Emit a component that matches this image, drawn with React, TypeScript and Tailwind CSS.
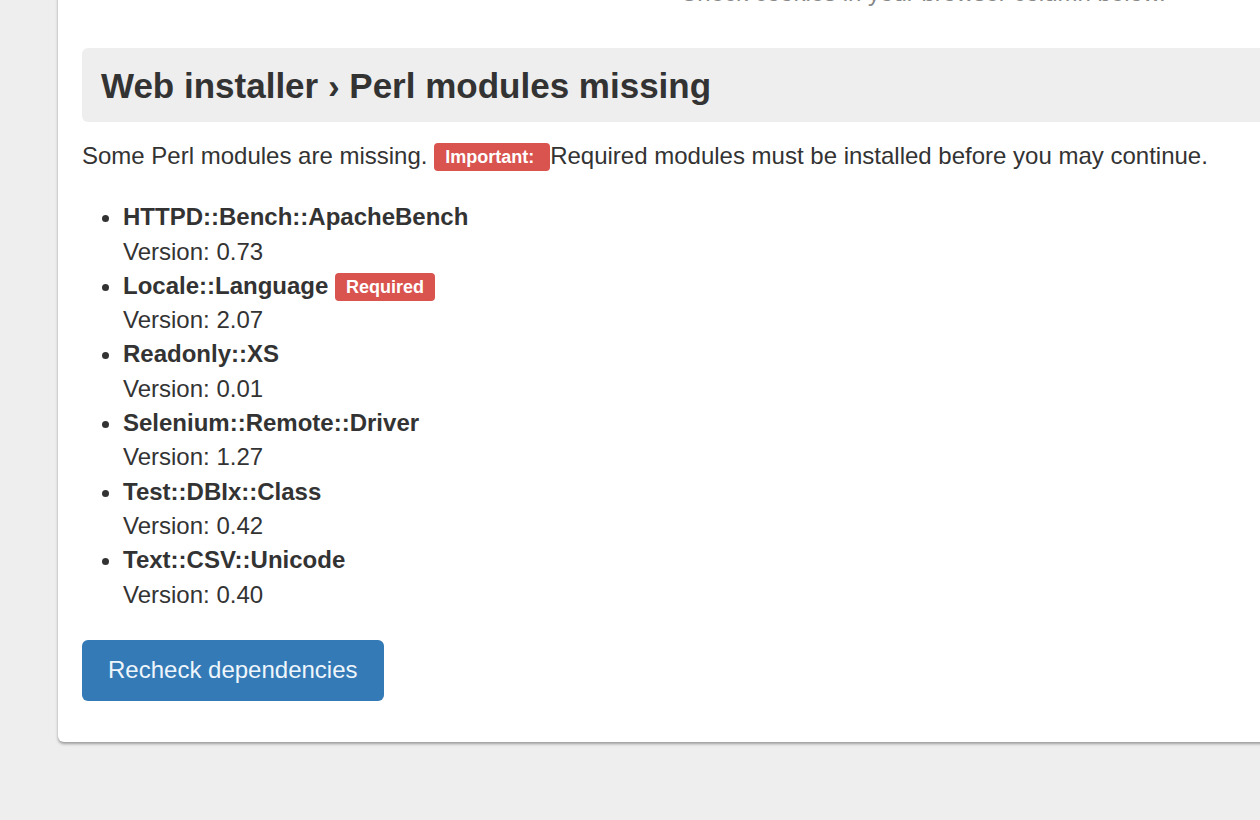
import React from 'react';

const modules = [
  { name: 'HTTPD::Bench::ApacheBench', version: '0.73', required: false },
  { name: 'Locale::Language', version: '2.07', required: true },
  { name: 'Readonly::XS', version: '0.01', required: false },
  { name: 'Selenium::Remote::Driver', version: '1.27', required: false },
  { name: 'Test::DBIx::Class', version: '0.42', required: false },
  { name: 'Text::CSV::Unicode', version: '0.40', required: false },
];

const Badge = ({ children }: { children: React.ReactNode }) => (
  <span className="inline-block rounded-[4px] bg-[#d9534f] px-[11px] pt-[5px] pb-[5px] align-[1px] text-[18px] font-bold leading-none text-white">
    {children}
  </span>
);

const App = () => {
  return (
    <div className="h-[820px] w-[1260px] overflow-hidden bg-[#eeeeee] font-['Liberation_Sans',Arial,sans-serif] text-[24px] leading-[34.3px] text-[#333333]">
      <div className="ml-[58px] -mt-[24px] w-[1400px] rounded-[6px] bg-white pb-[41px] pl-[24px] shadow-[0_2px_3px_rgba(0,0,0,0.35)]">
        {/* tail of the line above, mostly off screen */}
        <div className="h-[34px] pl-[598px] text-[#888]">Check cookies in your browser column below.</div>

        <div className="mt-[38px] flex h-[74px] items-center rounded-[6px] bg-[#eeeeee] pl-[19px]">
          <h1 className="text-[35px] font-bold leading-none text-[#333]">Web installer › Perl modules missing</h1>
        </div>

        <p className="mt-[17px]">
          Some Perl modules are missing. <Badge>Important:{'\u00a0'}</Badge>Required modules must be installed before you may continue.
        </p>

        <ul className="mt-[27px] list-disc pl-[41px]">
          {modules.map((m) => (
            <li key={m.name}>
              <span className="font-bold">{m.name}</span>
              {m.required && (
                <>
                  {' '}
                  <Badge>Required</Badge>
                </>
              )}
              <br />
              Version: {m.version}
            </li>
          ))}
        </ul>

        <button className="mt-[28px] h-[61px] rounded-[6px] bg-[#337ab7] px-[26px] text-[24px] text-[#eef5fb]">
          Recheck dependencies
        </button>
      </div>
    </div>
  );
};

export default App;
